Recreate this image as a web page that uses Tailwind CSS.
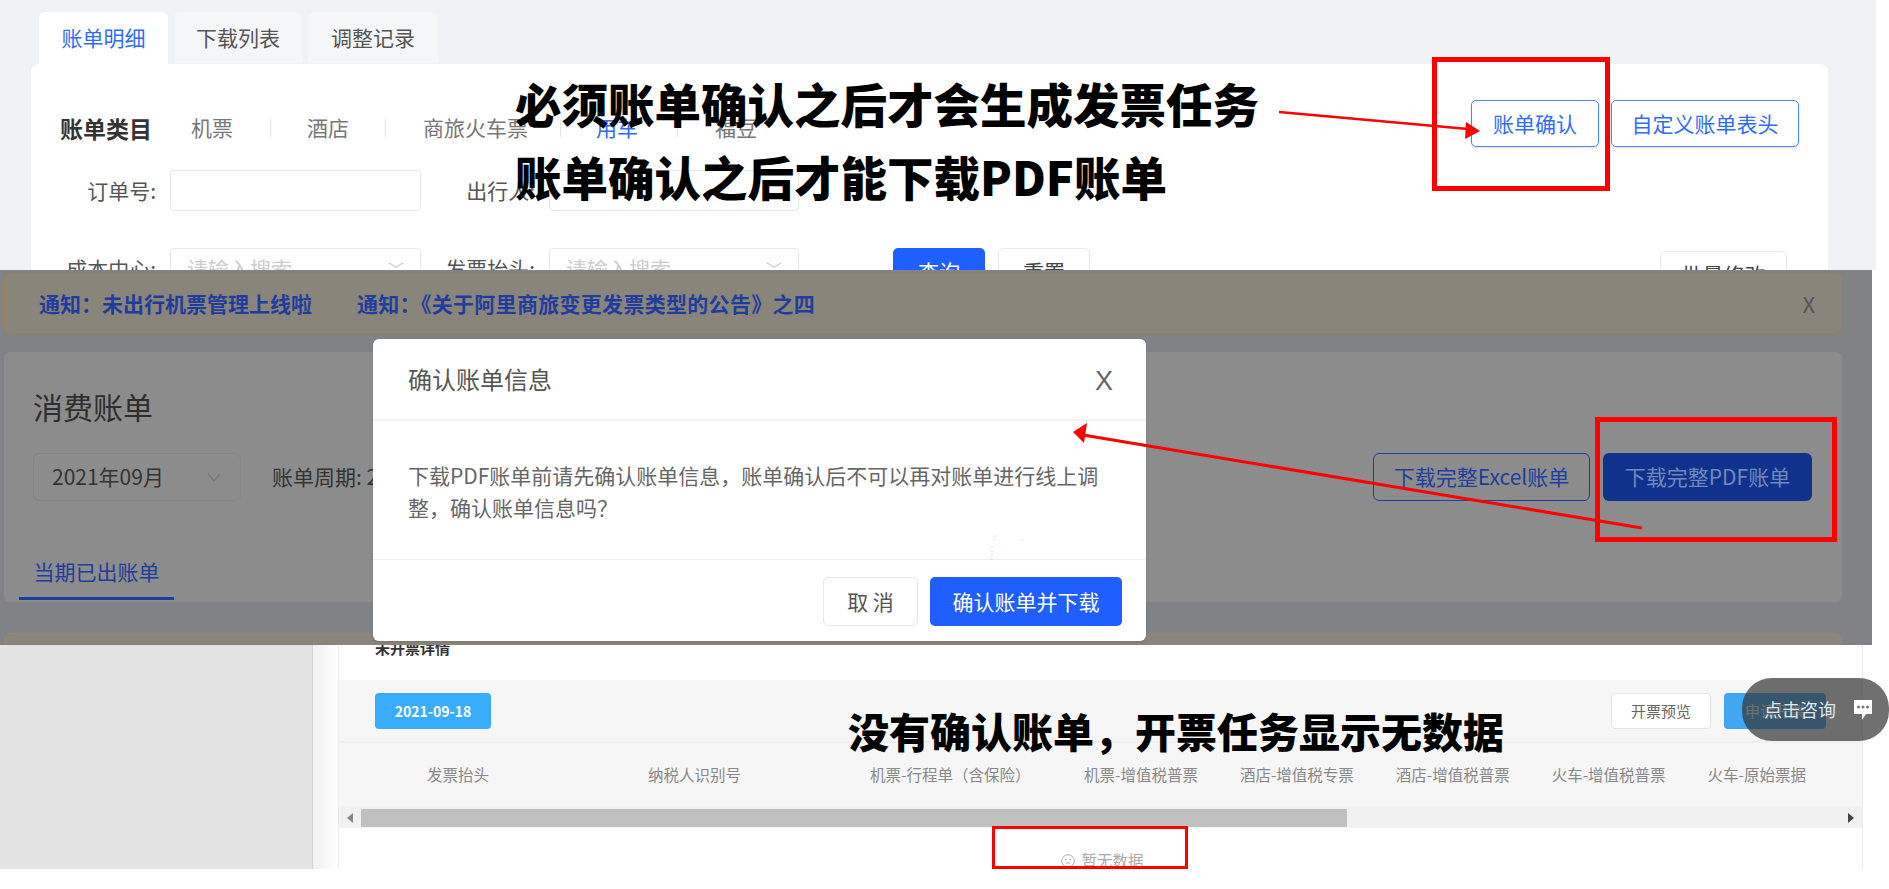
<!DOCTYPE html>
<html lang="zh">
<head>
  <meta charset="UTF-8" />
  <title>账单确认说明</title>
  <script src="https://cdn.jsdelivr.net/npm/@tailwindcss/browser@4"></script>
</head>
<body class="bg-white font-['Noto_Sans_CJK_SC','Liberation_Sans',sans-serif] text-[#555]">
<div class="relative w-[1889px] h-[889px] overflow-hidden bg-white">

  <!-- 上半部分: 账单明细 -->
  <section class="h-[270px] w-[1876px] overflow-hidden bg-[#f0f2f5] pt-3">
    <div class="flex pl-[39px] gap-[6px] text-[21px]">
      <div class="w-[129px] h-[52px] bg-white rounded-t-md flex items-center justify-center text-[#2f6bff]">账单明细</div>
      <div class="w-[128px] h-[51px] bg-[#f5f6f8] rounded-t-md flex items-center justify-center">下载列表</div>
      <div class="w-[130px] h-[51px] bg-[#f5f6f8] rounded-t-md flex items-center justify-center">调整记录</div>
    </div>
    <div class="ml-[31px] w-[1797px] h-[300px] bg-white rounded-t-lg">
      <div class="flex justify-between pt-[36px] pl-[29px] pr-[29px]">
        <div class="flex items-center h-10 mt-[8px] text-[21px] text-[#777] whitespace-nowrap">
          <span class="w-[131px] text-[23px] font-bold text-[#333]">账单类目</span>
          <span class="w-[42px]">机票</span>
          <i class="w-px h-[18px] bg-[#e6e6e6] ml-[37px] mr-[36px]"></i>
          <span class="w-[42px]">酒店</span>
          <i class="w-px h-[18px] bg-[#e6e6e6] ml-[36px] mr-[37px]"></i>
          <span class="w-[105px]">商旅火车票</span>
          <i class="w-px h-[18px] bg-[#e6e6e6] ml-[32px] mr-[35px]"></i>
          <span class="w-[46px] text-[#2f6bff]">用车</span>
          <i class="w-px h-[18px] bg-[#e6e6e6] ml-[35px] mr-[37px]"></i>
          <span class="w-[42px]">福豆</span>
        </div>
        <div class="flex gap-3 text-[21px] text-[#2f6bff]">
          <button class="w-[128px] h-[47px] border border-[#4f85f9] rounded-[5px] shadow-sm">账单确认</button>
          <button class="w-[188px] h-[47px] border border-[#4f85f9] rounded-[5px] shadow-sm">自定义账单表头</button>
        </div>
      </div>
      <div class="flex items-center mt-[22px] text-[21px]">
        <label class="w-[125px] text-right">订单号:</label>
        <div class="ml-[14px] w-[251px] h-[41px] border border-[#e8e8e8] rounded"></div>
        <label class="w-[114px] text-right">出行人:</label>
        <div class="ml-[14px] w-[250px] h-[41px] border border-[#e8e8e8] rounded"></div>
      </div>
      <div class="flex items-start mt-[37px] text-[21px]">
        <label class="w-[125px] text-right leading-[41px]">成本中心:</label>
        <div class="ml-[14px] w-[251px] h-[41px] border border-[#e8e8e8] rounded flex items-center justify-between px-4 text-[#ccc]">请输入搜索<span class="text-[#ccc] text-[16px]">﹀</span></div>
        <label class="w-[114px] text-right leading-[41px]">发票抬头:</label>
        <div class="ml-[14px] w-[250px] h-[41px] border border-[#e8e8e8] rounded flex items-center justify-between px-4 text-[#ccc]">请输入搜索<span class="text-[#ccc] text-[16px]">﹀</span></div>
        <button class="ml-[94px] w-[92px] h-[47px] bg-[#1f5eff] text-white rounded-[5px]">查询</button>
        <button class="ml-[13px] w-[92px] h-[47px] border border-[#e8e8e8] rounded-[5px] text-[#444]">重置</button>
        <button class="ml-[570px] mt-[3px] w-[127px] h-[47px] border border-[#e8e8e8] rounded-[5px] text-[#444]">批量修改</button>
      </div>
    </div>
  </section>

  <!-- 中间部分: 遮罩下的消费账单 -->
  <section class="h-[375px] w-[1872px] overflow-hidden bg-[#808285] pt-1">
    <div class="ml-1 w-[1838px] h-[59px] bg-[#8a857b] border border-[#a5814a] rounded-md flex items-center justify-between pl-[34px] pr-[26px] text-[21px] font-bold text-[#1f3d9c]">
      <div class="flex gap-[45px]">
        <span>通知：未出行机票管理上线啦</span>
        <span class="tracking-[0.3px]">通知：《关于阿里商旅变更发票类型的公告》之四</span>
      </div>
      <span class="font-normal text-[#555] text-[22px]">X</span>
    </div>
    <div class="ml-1 mt-[19px] w-[1838px] h-[250px] bg-[#8c8c8c] rounded-md relative">
      <div class="pl-[29px] pt-[32px] text-[30px] leading-[44px] text-[#2e2e2e]">消费账单</div>
      <div class="flex justify-between items-center mt-[25px] pl-[29px] pr-[30px] text-[21px]">
        <div class="flex items-center">
          <div class="w-[208px] h-[48px] border border-[#858585] rounded-md flex items-center justify-between pl-[18px] pr-[18px] text-[#333]">2021年09月
            <svg class="w-4 h-4" viewBox="0 0 16 16" fill="none" stroke="#777" stroke-width="1.2"><path d="M2 5l6 7 6-7"/></svg>
          </div>
          <span class="ml-[31px] text-[#333]">账单周期: 2</span>
        </div>
        <div class="flex gap-[13px]">
          <button class="w-[217px] h-[48px] border border-[#1f3f9c] rounded-md text-[#1f3f9c]">下载完整Excel账单</button>
          <button class="w-[209px] h-[48px] bg-[#10328c] rounded-md text-[#7088bb]">下载完整PDF账单</button>
        </div>
      </div>
      <div class="mt-[45px] ml-[15px] w-[155px] h-[54px] flex items-center justify-center border-b-[3px] border-[#1a3f9a] text-[21px] text-[#1f3d9c]">当期已出账单</div>
    </div>
    <div class="ml-1 mt-[31px] w-[1838px] h-[40px] bg-[#8a857b] border border-[#96866a] rounded-md"></div>
  </section>

  <!-- 下半部分: 未开票详情 -->
  <section class="flex h-[224px]">
    <div class="w-[313px] bg-[#e3e3e3] border-r border-[#d4d4d4]"></div>
    <div class="w-[25px] bg-gradient-to-r from-[#f0f0f0] to-white"></div>
    <div class="w-[1525px] border-l border-r border-[#ececec] bg-white overflow-hidden">
      <div class="h-[35px] pl-9 text-[15px] leading-[6px] font-bold text-[#333]">未开票详情</div>
      <div class="h-[63px] bg-[#f6f6f6] border-b-2 border-[#f0f0f0] flex items-start justify-between pt-[13px] pl-9 pr-9">
        <button class="w-[116px] h-9 bg-[#38acff] rounded text-white text-[14px] font-bold">2021-09-18</button>
        <div class="flex gap-[13px] text-[15px]">
          <button class="w-[100px] h-9 bg-white border border-[#e4e4e4] rounded text-[#666]">开票预览</button>
          <button class="w-[102px] h-9 bg-[#42a7f2] rounded text-white">申请开票</button>
        </div>
      </div>
      <div class="h-[64px] bg-[#f6f6f6] flex items-center text-[15.5px] text-[#888] whitespace-nowrap">
        <span class="ml-[88px]">发票抬头</span>
        <span class="ml-[159px]">纳税人识别号</span>
        <span class="ml-[129px] w-[160px]">机票-行程单（含保险）</span>
        <span class="ml-[54px]">机票-增值税普票</span>
        <span class="ml-[42px]">酒店-增值税专票</span>
        <span class="ml-[42px]">酒店-增值税普票</span>
        <span class="ml-[42px]">火车-增值税普票</span>
        <span class="ml-[42px]">火车-原始票据</span>
      </div>
      <div class="h-[21px] bg-[#f1f1f1] flex items-center px-2">
        <svg class="w-[6px] h-[10px]" viewBox="0 0 6 10" fill="#888"><path d="M6 0v10L0 5z"/></svg>
        <div class="ml-[8px] w-[986px] h-[18px] bg-[#c0c0c0]"></div>
        <svg class="ml-auto w-[6px] h-[10px]" viewBox="0 0 6 10" fill="#444"><path d="M0 0v10l6-5z"/></svg>
      </div>
      <div class="flex items-center justify-center gap-[6px] mt-[21px] pl-[4px] text-[15.5px] text-[#aaa]">
        <svg class="w-[14px] h-[14px]" viewBox="0 0 14 14" fill="none" stroke="#aaa" stroke-width="1"><circle cx="7" cy="7" r="6.3"/><path d="M4.500 10c1.300-1.600 3.700-1.600 5 0"/><circle cx="4.800" cy="5.400" r=".5"/><circle cx="9.200" cy="5.400" r=".5"/></svg>
        暂无数据
      </div>
    </div>
  </section>

  <!-- 确认弹窗 -->
  <div class="absolute left-[373px] top-[339px] w-[773px] h-[302px] bg-white rounded-md flex flex-col shadow-sm">
    <div class="h-[82px] border-b-2 border-[#f2f2f2] flex items-center justify-between pl-[35px] pr-[33px]">
      <span class="text-[24px] text-[#555]">确认账单信息</span>
      <span class="mt-[4px] font-['Liberation_Sans',sans-serif] text-[27px] text-[#666]">X</span>
    </div>
    <div class="h-[139px] border-b border-[#efefef] pt-[38px] pl-[35px] pr-[42px] text-[21px] leading-[32px] text-[#666]">下载PDF账单前请先确认账单信息，账单确认后不可以再对账单进行线上调整，确认账单信息吗？</div>
    <div class="flex justify-end gap-3 pt-[17px] pr-[24px] text-[21px]">
      <button class="w-[95px] h-[49px] border border-[#e8e8e8] rounded-[5px] text-[#555]">取 消</button>
      <button class="w-[192px] h-[49px] bg-[#1f5eff] text-white rounded-[5px]">确认账单并下载</button>
    </div>
  </div>

  <!-- 标注文字 -->
  <div class="absolute left-[515px] top-[73px] text-[46.5px] leading-[60px] font-black text-black">必须账单确认之后才会生成发票任务</div>
  <div class="absolute left-[515px] top-[146px] text-[46.5px] leading-[60px] font-black text-black">账单确认之后才能下载PDF账单</div>
  <div class="absolute left-[848px] top-[703px] text-[41px] leading-[54px] font-black text-black">没有确认账单，开票任务显示无数据</div>

  <!-- 红框 -->
  <div class="absolute left-[1432px] top-[57px] w-[178px] h-[134px] border-[5px] border-[#ff0000]"></div>
  <div class="absolute left-[1595px] top-[417px] w-[242px] h-[125px] border-[5px] border-[#ff0000]"></div>
  <div class="absolute left-[992px] top-[826px] w-[196px] h-[43px] border-[3px] border-[#ff0000]"></div>

  <!-- 红色箭头 -->
  <svg class="absolute inset-0 pointer-events-none" width="1889" height="889" viewBox="0 0 1889 889" fill="none">
    <path d="M1279 112L1468 129" stroke="#ff0000" stroke-width="2.5"/>
    <path d="M1480 131L1466 122L1465 139Z" fill="#ff0000"/>
    <path d="M1642 528L1083 435" stroke="#ff0000" stroke-width="3"/>
    <path d="M1073 432L1087 423L1084 443Z" fill="#ff0000"/>
    <path d="M992 560V545M993 540l4-5M1021 540l3-2" stroke="#f6c9d0" stroke-width="1" stroke-dasharray="2 2"/>
  </svg>

  <!-- 点击咨询 -->
  <div class="absolute left-[1742px] top-[678px] w-[147px] h-[63px] rounded-[30px] bg-[#333]/70 flex items-center pl-[22px] text-[18px] text-[#dfe7ee]">
    <span>点击咨询</span>
    <svg class="ml-[17px] w-[20px] h-[22px]" viewBox="0 0 20 22"><path d="M1 1h18v14h-6l-4 6v-6H1z" fill="#fff"/><circle cx="5.500" cy="8" r="1.500" fill="#777"/><circle cx="10" cy="8" r="1.500" fill="#777"/><circle cx="14.500" cy="8" r="1.500" fill="#777"/></svg>
  </div>
</div>
</body>
</html>
